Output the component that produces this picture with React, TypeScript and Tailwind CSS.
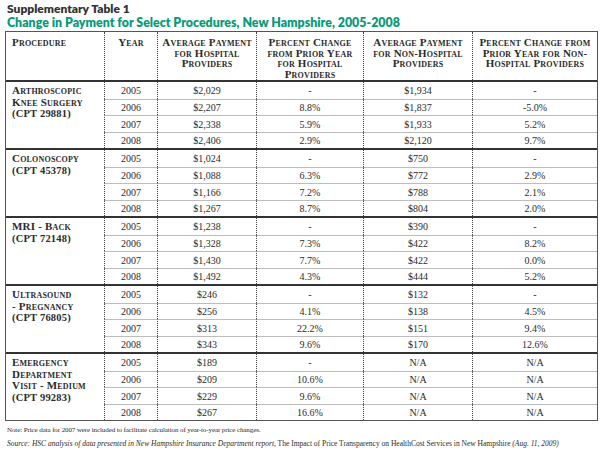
import React from "react";

type Row = [string, string, string, string, string];
type Group = { name: React.ReactNode; rows: Row[] };

const cpt = "[font-variant:normal] text-[10.5px]";

const groups: Group[] = [
  {
    name: (
      <>
        Arthroscopic
        <br />
        Knee Surgery
        <br />
        <span className={cpt}>(CPT 29881)</span>
      </>
    ),
    rows: [
      ["2005", "$2,029", "-", "$1,934", "-"],
      ["2006", "$2,207", "8.8%", "$1,837", "-5.0%"],
      ["2007", "$2,338", "5.9%", "$1,933", "5.2%"],
      ["2008", "$2,406", "2.9%", "$2,120", "9.7%"],
    ],
  },
  {
    name: (
      <>
        Colonoscopy
        <br />
        <span className={cpt}>(CPT 45378)</span>
      </>
    ),
    rows: [
      ["2005", "$1,024", "-", "$750", "-"],
      ["2006", "$1,088", "6.3%", "$772", "2.9%"],
      ["2007", "$1,166", "7.2%", "$788", "2.1%"],
      ["2008", "$1,267", "8.7%", "$804", "2.0%"],
    ],
  },
  {
    name: (
      <>
        MRI - Back
        <br />
        <span className={cpt}>(CPT 72148)</span>
      </>
    ),
    rows: [
      ["2005", "$1,238", "-", "$390", "-"],
      ["2006", "$1,328", "7.3%", "$422", "8.2%"],
      ["2007", "$1,430", "7.7%", "$422", "0.0%"],
      ["2008", "$1,492", "4.3%", "$444", "5.2%"],
    ],
  },
  {
    name: (
      <>
        Ultrasound
        <br />- Pregnancy
        <br />
        <span className={cpt}>(CPT 76805)</span>
      </>
    ),
    rows: [
      ["2005", "$246", "-", "$132", "-"],
      ["2006", "$256", "4.1%", "$138", "4.5%"],
      ["2007", "$313", "22.2%", "$151", "9.4%"],
      ["2008", "$343", "9.6%", "$170", "12.6%"],
    ],
  },
  {
    name: (
      <>
        Emergency
        <br />
        Department
        <br />
        Visit - Medium
        <br />
        <span className={cpt}>(CPT 99283)</span>
      </>
    ),
    rows: [
      ["2005", "$189", "-", "N/A", "N/A"],
      ["2006", "$209", "10.6%", "N/A", "N/A"],
      ["2007", "$229", "9.6%", "N/A", "N/A"],
      ["2008", "$267", "16.6%", "N/A", "N/A"],
    ],
  },
];

const cols = "grid grid-cols-[98px_53px_99px_107px_109px_1fr]";
const rowHeights = ["h-[17px]", "h-[16px]", "h-[17px]", "h-[16px]"];

export default function App() {
  return (
    <div className="w-[600px] h-[450px] bg-white text-[#2b2b2b] overflow-hidden">
      <div className="pl-[7px] pt-[2px] font-['Lato',sans-serif] font-extrabold leading-[14px]">
        <div className="text-[#333] text-[12px]">Supplementary Table 1</div>
        <div className="text-[#0a9a78] text-[12.4px]">
          Change in Payment for Select Procedures, New Hampshire, 2005-2008
        </div>
      </div>
      <div className="ml-[5px] mt-[1px] w-[593px] border border-[#555] font-['Liberation_Serif',serif] text-[10px]">
        <div
          className={`${cols} h-[50px] border-b-2 border-[#333] font-bold [font-variant:small-caps] text-[11px] tracking-[0.2px] leading-[10.5px] text-center`}
        >
          <div className="pl-[6px] pt-[5px] text-left">Procedure</div>
          <div className="pt-[5px] border-l border-dotted border-[#444]">Year</div>
          <div className="pt-[5px] border-l border-dotted border-[#444]">
            Average Payment
            <br />
            for Hospital
            <br />
            Providers
          </div>
          <div className="pt-[5px] border-l border-dotted border-[#444]">
            Percent Change
            <br />
            from Prior Year
            <br />
            for Hospital
            <br />
            Providers
          </div>
          <div className="pt-[5px] border-l border-dotted border-[#444]">
            Average Payment
            <br />
            for Non-Hospital
            <br />
            Providers
          </div>
          <div className="pt-[5px] border-l border-dotted border-[#444]">
            Percent Change from
            <br />
            Prior Year for Non-
            <br />
            Hospital Providers
          </div>
        </div>
        {groups.map((g, gi) => (
          <div key={gi} className={`${cols} ${gi > 0 ? "border-t-2 border-[#333]" : ""}`}>
            <div className="row-span-4 pl-[6px] pt-[3px] font-bold [font-variant:small-caps] text-[11px] tracking-[0.2px] leading-[11.5px]">
              {g.name}
            </div>
            {g.rows.map((r, ri) =>
              r.map((c, ci) => (
                <div
                  key={`${ri}-${ci}`}
                  className={`${rowHeights[ri]} flex items-center justify-center border-l border-dotted border-l-[#444] ${
                    ri > 0 ? "border-t border-t-[#bdbdbd] [border-top-style:solid]" : ""
                  }`}
                  style={{ gridRow: ri + 1, gridColumn: ci + 2 }}
                >
                  {c}
                </div>
              ))
            )}
          </div>
        ))}
      </div>
      <div className="pl-[7px] pt-[2px] font-['Liberation_Serif',serif] leading-[14px] text-[#2b2b2b]">
        <div className="text-[7px] tracking-[-0.1px]">
          Note: Price data for 2007 were included to facilitate calculation of year-to-year price changes.
        </div>
        <div className="text-[7.5px]">
          <span className="italic">
            Source: HSC analysis of data presented in New Hampshire Insurance Department report,
          </span>{" "}
          The Impact of Price Transparency on HealthCost Services in New Hampshire{" "}
          <span className="italic">(Aug. 11, 2009)</span>
        </div>
      </div>
    </div>
  );
}
